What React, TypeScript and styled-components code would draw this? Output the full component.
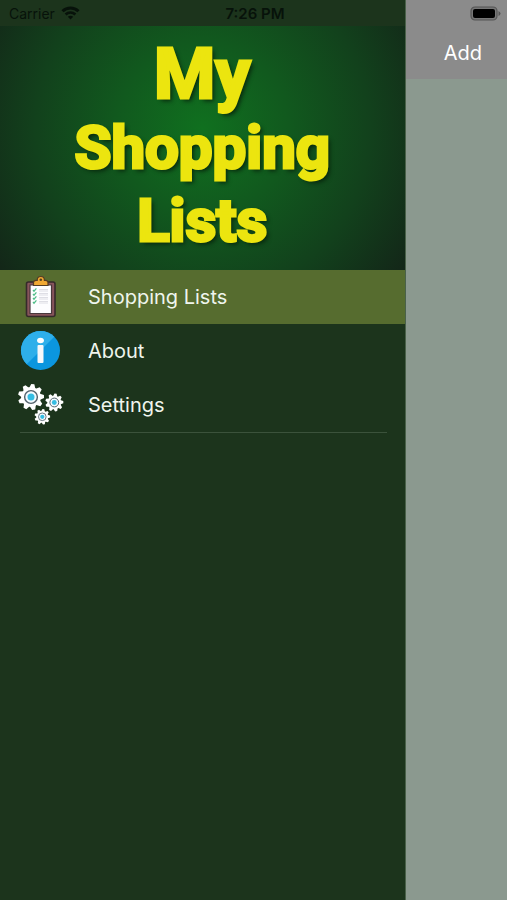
import React from "react";
import styled, { createGlobalStyle } from "styled-components";

const GlobalStyle = createGlobalStyle`
  *, *::before, *::after { box-sizing: border-box; }
  body {
    margin: 0;
    background: #8b998f;
    font-family: Inter, "Liberation Sans", sans-serif;
  }
`;

const Screen = styled.div`
  position: relative;
  display: flex;
  min-height: 100vh;
`;

const StatusBar = styled.header`
  position: absolute;
  inset: 0 0 auto;
  display: grid;
  grid-template-columns: 1fr auto 1fr;
  align-items: center;
  height: 26px;
  padding: 0 6px 0 9px;
  color: #07120a;
  font-size: 14px;
`;

const Carrier = styled.div`
  display: flex;
  align-items: center;
  gap: 6px;
`;

const Time = styled.time`
  font-size: 15px;
  font-weight: 600;
`;

const BatteryIcon = styled.svg`
  justify-self: end;
`;

const Drawer = styled.aside`
  flex: 0 0 80%;
  padding-top: 26px;
  background: #1c341c;
  border-right: 1px solid #496149;
`;

const Banner = styled.h1`
  display: flex;
  flex-direction: column;
  align-items: center;
  height: 244px;
  margin: 0;
  padding-top: 12px;
  background: radial-gradient(circle at 50% 42%, #10701f 0%, #11591e 35%, #12411c 68%, #132618 100%);
  color: #ece50f;
  font-family: Roboto, "Liberation Sans", sans-serif;
  font-weight: 700;
  text-shadow: 3px 3px 4px #08280d;
  -webkit-text-stroke: 3px #ece50f;
`;

const BannerLine = styled.span<{ $large?: boolean }>`
  font-size: ${({ $large }) => ($large ? 70 : 60)}px;
  line-height: 73px;
`;

const Menu = styled.nav`
  display: flex;
  flex-direction: column;
`;

const MenuLink = styled.a<{ $active?: boolean }>`
  display: flex;
  align-items: center;
  gap: 24px;
  height: 54px;
  padding-left: 18px;
  background: ${({ $active }) => ($active ? "#566c2f" : "transparent")};
  color: #eff5ed;
  font-size: 20px;
  text-decoration: none;
`;

const Divider = styled.hr`
  height: 1px;
  margin: 0 18px 0 20px;
  border: 0;
  background: #3b523b;
`;

const Page = styled.main`
  flex: 1;
  min-width: 0;
`;

const Toolbar = styled.div`
  display: flex;
  justify-content: flex-end;
  height: 79px;
  padding: 26px 25px 0 0;
  background: #8b8b8b;
`;

const AddButton = styled.button`
  padding: 0;
  border: 0;
  background: none;
  color: #fff;
  font: inherit;
  font-size: 20px;
`;

function WifiIcon() {
  return (
    <svg width="19" height="14" viewBox="0 0 19 14" fill="none" stroke="currentColor" strokeWidth="3" aria-hidden="true">
      <path d="M1.5 5.2C6 .8 13 .8 17.5 5.2" />
      <path d="M4.6 8.5C7.4 5.8 11.6 5.8 14.4 8.5" strokeWidth="2.6" />
      <path d="M9.5 13.5 6.8 10.8Q9.5 8.6 12.2 10.8Z" fill="currentColor" stroke="none" />
    </svg>
  );
}

function Battery() {
  return (
    <BatteryIcon width="31" height="15" viewBox="0 0 31 15" role="img" aria-label="Battery full">
      <rect x="1" y="1" width="26" height="13" rx="4" fill="#777" stroke="#555" strokeWidth="1.2" />
      <rect x="3" y="3" width="22" height="9" rx="2" fill="#000" />
      <path d="M28.5 5v5q2-1 2-2.5t-2-2.5Z" fill="#555" />
    </BatteryIcon>
  );
}

function ClipboardIcon() {
  return (
    <svg width="46" height="46" viewBox="0 0 46 46" aria-hidden="true">
      <rect x="8.5" y="8" width="28.5" height="34.5" rx="2" fill="#87545b" stroke="#352a2b" strokeWidth="1.6" />
      <path d="M12 11h21.5v28.500H12Z" fill="#fdfdff" stroke="#49383c" strokeWidth="1.2" />
      <path
        d="M15.500 11.500V8.500Q15.500 6.300 18 6.300H19.200Q19.200 2.500 22.800 2.500T26.400 6.300H27.600Q30 6.300 30 8.500V11.500Z"
        fill="#f0a833"
        stroke="#543d24"
        strokeWidth="1.2"
      />
      <circle cx="22.8" cy="5.800" r="1.300" fill="#54411f" />
      {[16, 20, 24, 28].map((y) => (
        <g key={y} fill="none">
          <path d={`m15 ${y} 1 1.2 2.4-2.9`} stroke="#4fbd88" strokeWidth="1.2" />
          <path d={`M21 ${y - 0.5}h9M21 ${y + 1}h9`} stroke="#d5d5de" strokeWidth="0.8" />
        </g>
      ))}
    </svg>
  );
}

function InfoIcon() {
  return (
    <svg width="46" height="46" viewBox="0 0 46 46" aria-hidden="true">
      <circle cx="22.5" cy="22.5" r="19.5" fill="#0b96df" />
      <path d="M8.7 36.3A19.5 19.5 0 0 1 36.3 8.7Z" fill="#2eafea" />
      <ellipse cx="22.5" cy="12.5" rx="3.4" ry="2.8" fill="#fff" />
      <rect x="19.5" y="17" width="6" height="18" rx="1" fill="#f7f8fa" />
    </svg>
  );
}

interface GearProps {
  x: number;
  y: number;
  r: number;
}

function Gear({ x, y, r }: GearProps) {
  return (
    <g transform={`translate(${x} ${y})`}>
      {Array.from({ length: 9 }, (_, i) => (
        <path
          key={i}
          d={`M${-r * 0.25} ${-r * 0.65}L${-r * 0.12} ${-r}H${r * 0.12}L${r * 0.25} ${-r * 0.65}Z`}
          fill="#fff"
          transform={`rotate(${i * 40 + 8})`}
        />
      ))}
      <circle r={r * 0.76} fill="#fff" />
      <circle r={r * 0.49} fill="#f3fbff" stroke="#53616c" strokeWidth={r * 0.11} />
      <circle r={r * 0.27} fill="#35bde3" />
    </g>
  );
}

function GearsIcon() {
  return (
    <svg width="46" height="46" viewBox="0 0 46 46" aria-hidden="true">
      <Gear x={13} y={15} r={13} />
      <Gear x={36.3} y={20.5} r={9} />
      <Gear x={24.3} y={34.8} r={7.8} />
    </svg>
  );
}

export default function App() {
  return (
    <>
      <GlobalStyle />
      <Screen>
        <Drawer>
          <Banner>
            <BannerLine $large>My</BannerLine>
            <BannerLine>Shopping</BannerLine>
            <BannerLine>Lists</BannerLine>
          </Banner>
          <Menu aria-label="Main menu">
            <MenuLink href="#lists" $active aria-current="page">
              <ClipboardIcon />
              Shopping Lists
            </MenuLink>
            <MenuLink href="#about">
              <InfoIcon />
              About
            </MenuLink>
            <MenuLink href="#settings">
              <GearsIcon />
              Settings
            </MenuLink>
          </Menu>
          <Divider />
        </Drawer>
        <Page>
          <Toolbar>
            <AddButton type="button">Add</AddButton>
          </Toolbar>
        </Page>
        <StatusBar>
          <Carrier>
            Carrier
            <WifiIcon />
          </Carrier>
          <Time>7:26 PM</Time>
          <Battery />
        </StatusBar>
      </Screen>
    </>
  );
}
